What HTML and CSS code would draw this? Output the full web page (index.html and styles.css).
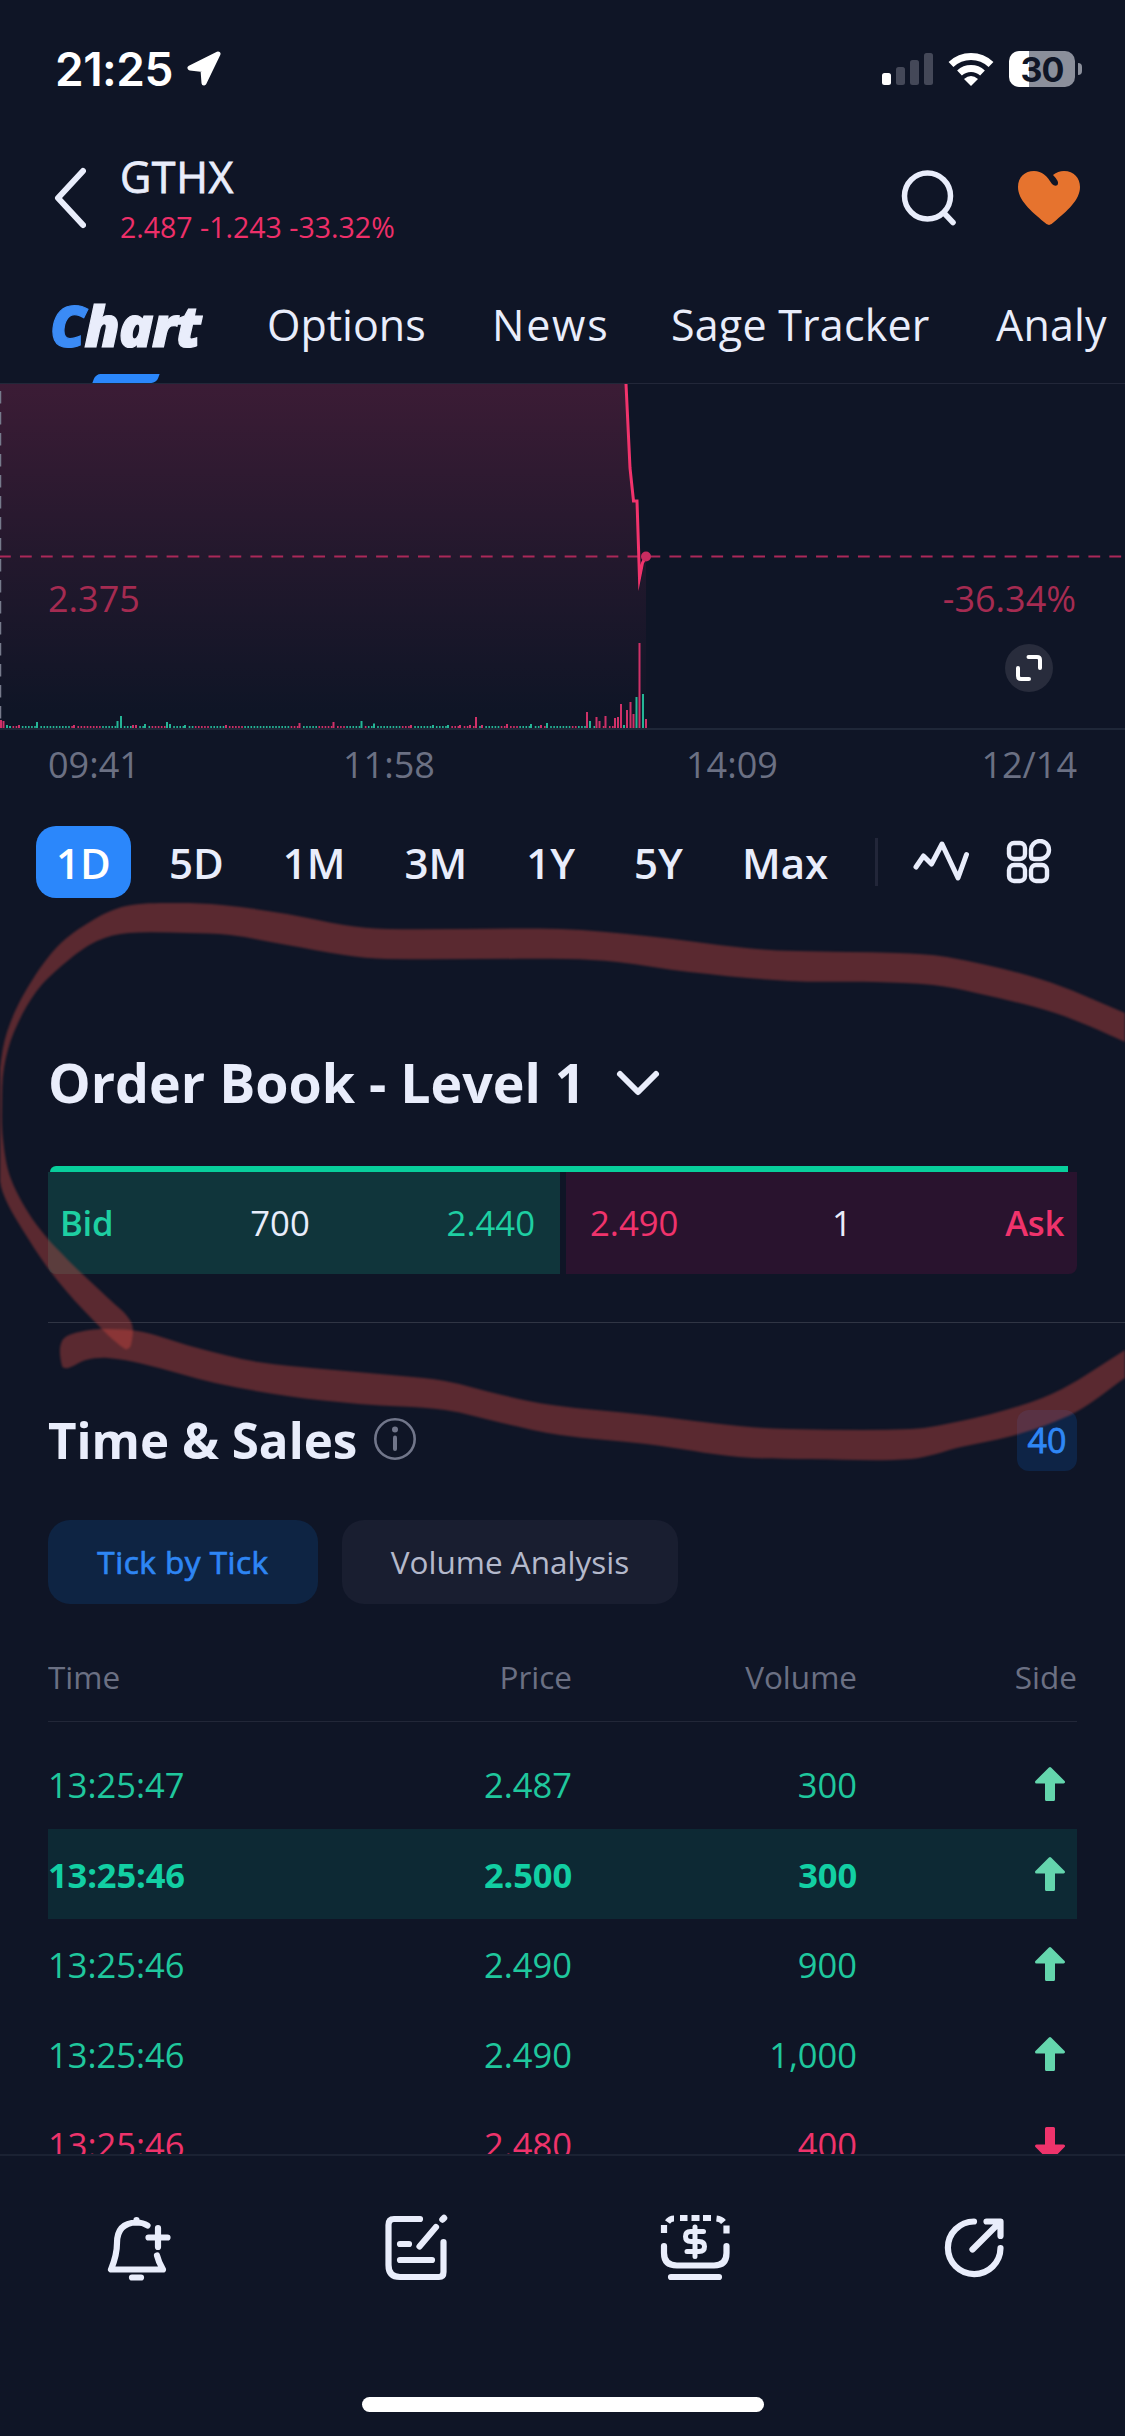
FILE: index.html
```html
<!DOCTYPE html>
<html lang="en">
<head>
<meta charset="utf-8">
<title>GTHX</title>
<link rel="stylesheet" href="styles.css">
</head>
<body>
<div class="screen">
  <div class="status">
    <span class="clock">21:25</span>
    <svg class="loc" width="36" height="36" viewBox="0 0 36 36"><path d="M32 3 L4 17 L17 18.500 L18 32 Z" fill="#fff" stroke="#fff" stroke-width="5" stroke-linejoin="round"/></svg>
    <svg class="signal" width="52" height="34" viewBox="0 0 52 34"><rect y="21" width="9" height="12" rx="2.500" fill="#fff"/><g fill="#444858"><rect x="14" y="15" width="9" height="18" rx="2.500"/><rect x="28" y="8" width="9" height="25" rx="2.500"/><rect x="42" y="1" width="9" height="32" rx="2.500"/></g></svg>
    <svg class="wifi" width="46" height="34" viewBox="0 0 46 34"><g fill="none" stroke="#fff" stroke-width="7"><path d="M3 12.500 A29 29 0 0 1 43 12.500"/><path d="M11.500 21 A17 17 0 0 1 34.500 21"/></g><path d="M23 34 L16 27 Q23 21 30 27 Z" fill="#fff"/></svg>
    <div class="battery"><span>30</span></div>
    <i class="nub"></i>
  </div>

  <div class="header">
    <svg class="back" width="32" height="64" viewBox="0 0 32 64"><path d="M29 5 L4 32 L29 59" fill="none" stroke="#e9edfb" stroke-width="6" stroke-linecap="round" stroke-linejoin="round"/></svg>
    <div class="quote">
      <div class="ticker">GTHX</div>
      <div class="change">2.487 -1.243 -33.32%</div>
    </div>
    <svg class="search" width="56" height="56" viewBox="0 0 56 56"><g fill="none" stroke="#e9edfb" stroke-width="5.500" stroke-linecap="round"><circle cx="26.500" cy="26" r="23"/><path d="M43 43 L52 52.500"/></g></svg>
    <svg class="heart" width="64" height="56" viewBox="0 0 64 56"><path d="M32 55 Q30 55 27 52 C14 41 1 30 1 17 C1 7 8 1 17 1 C25 1 30 6 35 14 Q38 17 40.500 15 Q43 12 36 5 Q41 1 47 1 C57 1 63 8 63 17 C63 30 50 41 37 52 Q34 55 32 55 Z" fill="#e6732e"/></svg>
  </div>

  <div class="tabs">
    <div class="tab active"><b>C</b>hart<i></i></div>
    <div class="tab t-opt">Options</div>
    <div class="tab t-news">News</div>
    <div class="tab t-sage">Sage Tracker</div>
    <div class="tab t-ana">Analysis</div>
  </div>

  <div class="chart">
    <svg class="plot" width="1125" height="347" viewBox="0 383 1125 347">
      <defs><linearGradient id="fade" x1="0" y1="0" x2="0" y2="1"><stop offset="0" stop-color="#ff3a78" stop-opacity=".185"/><stop offset=".6" stop-color="#ff3a78" stop-opacity=".065"/><stop offset=".96" stop-color="#ff3a78" stop-opacity="0"/></linearGradient></defs>
      <path d="M0 384 H626 L630 468 L633.500 501 H637 L639.500 588 L646 556 V728 H0 Z" fill="url(#fade)"/>
      <path d="M0 383.500 H1125" stroke="#222739"/>
      <path d="M0 729 H1125" stroke="#1f2738" stroke-width="2"/>
      <path d="M.5 391 V727" stroke="#767a8b" stroke-width="1.500" stroke-dasharray="12.500 8.500"/>
      <path d="M-1 556.500 H1125" stroke="#ab2859" stroke-width="2.200" stroke-dasharray="11.800 9.150"/>
      <g id="volume"></g>
      <path d="M626 384 L630 468 L633.500 501 H637 L639.500 578 L642.500 563 L646 556" fill="none" stroke="#f2336c" stroke-width="3" stroke-miterlimit="10"/>
      <circle cx="646" cy="556.500" r="5" fill="#c82c60"/>
    </svg>
    <div class="levels"><span>2.375</span><span>-36.34%</span></div>
    <div class="expand"><svg width="28" height="28" viewBox="0 0 28 28"><path d="M13.500 3 H22 Q25 3 25 6 V14 M3 14 V22 Q3 25 6 25 H14" fill="none" stroke="#fff" stroke-width="4" stroke-linecap="round"/></svg></div>
    <div class="axis"><span>09:41</span><span>11:58</span><span>14:09</span><span>12/14</span></div>
  </div>

  <div class="ranges">
    <span class="on">1D</span><span>5D</span><span>1M</span><span>3M</span><span>1Y</span><span>5Y</span><span class="max">Max</span>
    <i class="sep"></i>
    <svg class="wave" width="58" height="42" viewBox="0 0 58 42"><path d="M4 27 L11.500 16 L19.500 24 L30 4 L46 38 L54.500 14.500" fill="none" stroke="#e9edfb" stroke-width="5" stroke-linecap="round" stroke-linejoin="round"/></svg>
    <svg class="grid" width="46" height="46" viewBox="0 0 46 46"><g fill="none" stroke="#e9edfb" stroke-width="4.400"><rect x="3" y="4" width="16" height="16" rx="5"/><rect x="3" y="26" width="16" height="16" rx="5"/><rect x="25" y="26" width="16" height="16" rx="5"/><path d="M25 17 V11.500 A9 9 0 1 1 34 20 H28 Q25 20 25 17 Z"/></g></svg>
  </div>

  <div class="book">
    <div class="title">Order Book - Level 1 <svg width="46" height="30" viewBox="0 0 46 30"><path d="M5 5 L23 23 L41 5" fill="none" stroke="#e9edfb" stroke-width="6" stroke-linecap="round" stroke-linejoin="round"/></svg></div>
    <div class="ratio"></div>
    <div class="sides">
      <div class="bid"><b>Bid</b><em>700</em><span>2.440</span></div>
      <div class="ask"><span>2.490</span><em>1</em><b>Ask</b></div>
    </div>
  </div>

  <div class="sales">
    <div class="sales-head"><span class="h2">Time &amp; Sales</span>
      <svg width="44" height="44" viewBox="0 0 44 44"><circle cx="22" cy="22" r="19.700" fill="none" stroke="#71768a" stroke-width="2.600"/><circle cx="22" cy="12.500" r="3" fill="#71768a"/><path d="M22 20.500 V32" stroke="#71768a" stroke-width="4" stroke-linecap="round"/></svg>
      <span class="badge">40</span></div>
    <div class="pills"><span class="pill on">Tick by Tick</span><span class="pill">Volume Analysis</span></div>
    <div class="row head"><span>Time</span><span>Price</span><span>Volume</span><span>Side</span></div>
    <div class="rows">
      <div class="row"><span>13:25:47</span><span>2.487</span><span>300</span><svg class="arrow" viewBox="0 0 32 36"><path d="M16 2.500 L29.500 16 H19.500 V33.500 H12.500 V16 H2.500 Z"/></svg></div>
      <div class="row hot"><span>13:25:46</span><span>2.500</span><span>300</span><svg class="arrow" viewBox="0 0 32 36"><path d="M16 2.500 L29.500 16 H19.500 V33.500 H12.500 V16 H2.500 Z"/></svg></div>
      <div class="row"><span>13:25:46</span><span>2.490</span><span>900</span><svg class="arrow" viewBox="0 0 32 36"><path d="M16 2.500 L29.500 16 H19.500 V33.500 H12.500 V16 H2.500 Z"/></svg></div>
      <div class="row"><span>13:25:46</span><span>2.490</span><span>1,000</span><svg class="arrow" viewBox="0 0 32 36"><path d="M16 2.500 L29.500 16 H19.500 V33.500 H12.500 V16 H2.500 Z"/></svg></div>
      <div class="row down"><span>13:25:46</span><span>2.480</span><span>400</span><svg class="arrow" viewBox="0 0 32 36"><path d="M16 33.500 L29.500 20 H19.500 V2.500 H12.500 V20 H2.500 Z"/></svg></div>
    </div>
  </div>

  <div class="toolbar">
    <svg width="70" height="70" viewBox="104 2213 70 70"><path d="M147.500 2225.500 Q143 2222.500 136.500 2222.500 Q117 2223 117 2243 C117 2255 114 2262 111 2269.500 H163 Q158.500 2262 157 2255.500 M136.500 2220 V2222 M132 2277.500 H141 M148.500 2237.500 H167.500 M158 2228 V2247"/></svg>
    <svg width="70" height="70" viewBox="382 2213 70 70"><path d="M421 2219 H395 Q389.500 2219 389.500 2225 V2265 Q389.500 2277 401 2277 H440 Q444.500 2277 444.500 2272 V2242 M401 2244 H410 M401 2260 H433 M420.500 2246.500 L437 2227"/><path d="M443.500 2219.500 L445 2218" stroke-width="6.500"/></svg>
    <svg width="74" height="70" viewBox="659 2213 74 70"><path d="M665 2246 V2253 Q665 2265.500 678 2265.500 H715 Q727.500 2265.500 727.500 2253 V2246 M672 2277 H720"/><path stroke-width="5" d="M704.500 2231.500 H691.500 Q686.500 2231.500 686.500 2236.500 Q686.500 2241.500 692 2241.500 H700 Q705.500 2241.500 705.500 2246.500 Q705.500 2251.500 700 2251.500 H688 M696 2227 V2256.500"/><path d="M665 2225 V2233 M668.500 2222 Q671 2218.500 675 2218.500 M681 2218 H688.500 M692.500 2218 H700.500 M704 2218 H712 M717.500 2218.500 Q722 2219 724.500 2222 M727.500 2225.500 V2233.500" stroke-linecap="butt"/></svg>
    <svg width="70" height="70" viewBox="939 2213 70 70"><path d="M974 2221.500 A26.300 26.300 0 1 0 1000.500 2248 M986.500 2221.500 H1000.500 V2236 M972.500 2249.500 L1000 2222"/></svg>
  </div>
  <div class="home"></div>

  <svg class="marker" width="1125" height="600" viewBox="0 880 1125 600"><g id="marker" fill="#dc4b41" fill-opacity=".37"></g></svg>
</div>
<script src="script.js"></script>
</body>
</html>
```
FILE: styles.css
```css
* { box-sizing: border-box; }
body { margin: 0; background: #0f1526; }
.screen { position: relative; width: 1125px; height: 2436px; overflow: hidden; background: #0f1526; color: #e9edfb; font-family: "Open Sans", "Noto Sans", sans-serif; white-space: nowrap; display: flex; flex-direction: column; }
svg { display: block; flex: none; }

.status { height: 138px; padding: 0 43px 0 55px; display: flex; align-items: center; color: #fff; font-family: Inter, sans-serif; }
.clock { width: 119px; font-size: 46px; font-weight: 600; letter-spacing: -.5px; }
.loc { margin-left: 12px; }
.signal { margin-left: auto; }
.wifi { margin-left: 14px; }
.battery { width: 66px; height: 36px; margin-left: 15px; border-radius: 10px; background: linear-gradient(90deg, #fff 20px, #8b8f9b 20px); color: #0f1526; font-size: 34px; font-weight: 700; line-height: 37px; text-align: center; letter-spacing: -1px; }
.nub { width: 4px; height: 12px; margin-left: 3px; border-radius: 0 4px 4px 0; background: #8b8f9b; }

.header { height: 120px; padding: 0 44px 0 54px; display: flex; align-items: center; }
.quote { margin-left: 34px; }
.ticker { font-size: 43px; line-height: 50px; letter-spacing: .6px; -webkit-text-stroke: .8px; }
.change { margin-top: 7px; font-size: 28.500px; line-height: 36px; color: #ee2f69; }
.search { margin-left: auto; }
.heart { margin: -1px 0 0 60px; }

.tabs { height: 125px; display: flex; margin-right: 18px; overflow: hidden; padding-left: 50px; font-size: 43px; line-height: 60px; padding-top: 37px; letter-spacing: .2px; }
.tab { flex: none; }
.tab.active { position: relative; width: 217px; height: 88px; font-weight: 800; font-style: italic; font-size: 57px; letter-spacing: -1.300px; -webkit-text-stroke: 1.200px; }
.tab.active b { color: #3b8bf5; font-weight: 800; }
.tab.active i { position: absolute; left: 44px; bottom: 0; width: 64px; height: 9px; background: #2b87fb; border-radius: 5px 0 5px 0; transform: skewX(-20deg); }
.t-opt { width: 225px; letter-spacing: 0; }
.t-news { width: 179px; letter-spacing: 1.800px; }
.t-sage { width: 325px; }

.chart { position: relative; height: 412px; }
.plot { height: 347px; }
.levels { position: absolute; left: 48px; right: 49px; top: 191px; display: flex; justify-content: space-between; font-size: 36px; line-height: 50px; color: #a52b51; }
.expand { position: absolute; left: 1005px; top: 261px; width: 48px; height: 48px; border-radius: 50%; background: #282c3c; display: grid; place-items: center; }
.axis { display: grid; grid-template-columns: 295px 343px 1fr auto; padding: 10px 48px 0 48px; font-size: 36px; line-height: 50px; color: #6b7083; }

.ranges { height: 134px; padding-left: 36px; display: flex; align-items: center; font-size: 42px; font-weight: 600; }
.ranges span { flex: none; margin-right: 59px; }
.ranges .on { width: 95px; height: 72px; line-height: 73px; border-radius: 20px; background: #2b87fb; color: #fff; text-align: center; margin-right: 38px; }
.ranges .max { margin-right: 0; }
.sep { flex: none; width: 3px; height: 48px; margin-left: auto; background: #222639; }
.wave { margin: -2px 0 0 34px; }
.grid { margin: 0 73px 0 36px; }

.book { height: 394px; margin-left: 48px; padding-top: 108px; border-bottom: 1.500px solid #303544; }
.title { display: flex; align-items: center; height: 90px; font-size: 53.700px; font-weight: 700; }
.title svg { margin-left: 30px; margin-top: 4px; }
.ratio { width: 1018px; height: 6px; margin: 39px 0 0 2px; background: #08cf9c; border-radius: 6px 0 0 0; }
.sides { width: 1029px; display: grid; grid-template-columns: 512px 511px; gap: 6px; font-size: 34.700px; line-height: 102px; }
.bid, .ask { display: grid; height: 102px; }
.bid { grid-template-columns: 140px 160px 175px; padding-left: 12px; background: #10353b; color: #1ecfa2; border-radius: 0 0 0 8px; }
.ask { grid-template-columns: 183px 160px 142px; padding-left: 13px; background: #29132e; color: #f0336c; border-radius: 0 0 8px 0; }
.sides b { font-weight: 600; letter-spacing: -.3px; }
.sides em { font-style: normal; color: #e9edfb; text-align: center; }
.bid span, .ask b { text-align: right; }
.ask span { padding-left: 11px; }

.sales { height: 831px; margin: 0 48px; overflow: hidden; }
.sales-head { display: flex; align-items: center; height: 122px; margin-top: 56px; }
.h2 { font-size: 49.300px; font-weight: 700; margin-right: 16px; margin-top: -2px; }
.sales-head svg { margin-top: -2px; }
.badge { width: 60px; height: 61px; margin-left: auto; border-radius: 12px; background: #0e2446; color: #2f87f5; font-size: 34px; line-height: 61px; text-align: center; -webkit-text-stroke: .8px; }
.pills { display: flex; gap: 24px; margin-top: 19px; }
.pill { width: 336px; height: 84px; text-align: center; border-radius: 22px; background: #191e30; color: #b4b9cb; font-size: 31.500px; line-height: 84px; }
.pill.on { width: 270px; background: #0e2443; color: #2e86f4; letter-spacing: .5px; -webkit-text-stroke: .7px; }
.row { display: grid; grid-template-columns: 264px 260px 285px 220px; height: 90px; line-height: 92px; font-size: 34.500px; color: #1fc79d; }
.row span + span { text-align: right; }
.row.head { height: 118px; padding-top: 27px; font-size: 31.500px; color: #6b7083; border-bottom: 1px solid #222738; }
.rows { padding-top: 17px; }
.row.hot { background: #0d2934; color: #12cfa3; font-weight: 700; }
.row.down { color: #ee336b; }
.row.hot span { letter-spacing: -.15px; }
.arrow { width: 32px; height: 36px; justify-self: end; margin: 27px 11px 0 0; fill: #64d5ad; stroke: #64d5ad; stroke-width: 3; stroke-linejoin: round; }
.down .arrow { fill: #ee336b; stroke: #ee336b; }

.toolbar { height: 243px; border-top: 2px solid #1b2233; padding: 57px 116px 0 104px; display: flex; justify-content: space-between; }
.toolbar svg { fill: none; stroke: #e9edfb; stroke-width: 6.200; stroke-linecap: round; stroke-linejoin: round; }
.home { width: 402px; height: 15px; margin: 0 0 0 362px; border-radius: 8px; background: #fff; }
.marker { position: absolute; left: 0; top: 880px; pointer-events: none; filter: blur(.8px); }
```
FILE: script.js
```js
const NS = 'http://www.w3.org/2000/svg';
const UP = '#25b596', DOWN = '#cf3168', BASE = 728;

// Volume bars: [x, height, colour]
const tall = [[1,8,0],[3.5,7,0],[7,3,1],[10,2,1],[19,3,0],[37,6,1],[74,3,0],[117.5,7,1],[121,12,1],[133,3,0],[136,3,0],[145,4,1],[167,6,1],[170,4,1],[185,3,1],[226,3,0],[299.5,5,0],[333.5,6,0],[361.5,7,1],[374,4.5,1],[411,3,0],[433,3,1],[448,3,1],[460,3,0],[470,3,0],[476,11,0],[482,3,0],[507,4,0],[531,4,1],[541,3,0],[547,5,1],[587,16,0],[590,7,1],[596.5,11,0],[599.5,7,0],[605.5,12,0],[615,10,0],[618,11,0],[621,24,0],[624,3,1],[627,18,0],[630.5,26,0],[633.5,14,0],[636.5,31,1],[639.5,85,0],[643,34,1],[646,9,0]];
const falling = [[13,20],[70,100],[150,165],[195,210],[225,245],[290,300],[318,345],[360,368],[400,415],[450,475],[500,520],[540,550],[570,578],[600,622]];
const volume = document.getElementById('volume');
function bar(x, h, up, w) {
  const r = document.createElementNS(NS, 'rect');
  r.setAttribute('x', x - w / 2);
  r.setAttribute('y', BASE - h);
  r.setAttribute('width', w);
  r.setAttribute('height', h);
  r.setAttribute('fill', up ? UP : DOWN);
  volume.appendChild(r);
}
for (let x = 1; x < 647; x += 3.09) {
  if (tall.some(t => Math.abs(t[0] - x) < 1.6)) continue;
  bar(x, 2, !falling.some(f => x > f[0] && x < f[1]), 1.6);
}
tall.forEach(t => bar(t[0], t[1], t[2], 2));

// Hand-drawn marker strokes, each a smoothed closed outline
const strokes = [
  [[1150,1026],[1125,1013],[1040,979],[947,957],[897,953],[796,951],[746,948],[646,936],[560,929],[387,929],[344,925],[287,914],[222,905],[172,903],[126,906],[93,920],[57,947],[25,992],[7,1032],[0,1068],[-3,1110],[-2,1157],[3,1193],[29,1240],[57,1280],[93,1320],[125,1349],[131,1345],[131,1322],[108,1298],[72,1264],[36,1224],[11,1179],[3,1139],[2,1104],[4,1068],[14,1032],[36,992],[65,963],[97,941],[129,933],[187,933],[230,935],[287,945],[344,955],[387,959],[567,959],[617,962],[689,972],[789,981],[875,982],[933,985],[976,993],[1055,1013],[1125,1042],[1150,1056]],
  [[62,1341],[79,1332],[108,1329],[143,1332],[194,1347],[258,1362],[323,1369],[402,1376],[445,1381],[502,1395],[552,1405],[646,1415],[739,1426],[789,1429],[911,1429],[961,1421],[1019,1406],[1062,1389],[1125,1350],[1150,1334],[1150,1362],[1125,1378],[1076,1412],[1019,1434],[961,1447],[911,1459],[811,1459],[739,1457],[646,1444],[560,1435],[502,1423],[445,1410],[359,1404],[287,1396],[215,1383],[143,1364],[108,1358],[86,1360],[68,1368],[62,1366]]
];
strokes.forEach(p => {
  const n = p.length;
  let d = 'M' + p[0];
  for (let i = 0; i < n; i++) {
    const a = p[(i + n - 1) % n], b = p[i], c = p[(i + 1) % n], e = p[(i + 2) % n];
    const k = Math.hypot(c[0] - b[0], c[1] - b[1]) / 3;
    const t1 = Math.hypot(c[0] - a[0], c[1] - a[1]) || 1, t2 = Math.hypot(e[0] - b[0], e[1] - b[1]) || 1;
    d += ` C${b[0] + (c[0] - a[0]) / t1 * k} ${b[1] + (c[1] - a[1]) / t1 * k} ${c[0] - (e[0] - b[0]) / t2 * k} ${c[1] - (e[1] - b[1]) / t2 * k} ${c}`;
  }
  const path = document.createElementNS(NS, 'path');
  path.setAttribute('d', d + 'Z');
  document.getElementById('marker').appendChild(path);
});
```
